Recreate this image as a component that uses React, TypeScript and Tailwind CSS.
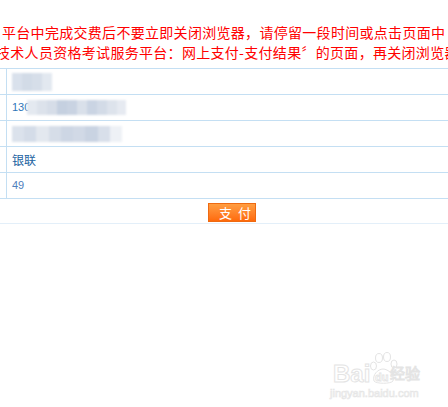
import React from "react";

function Blocks({ colors, w, h }: { colors: string[]; w: number; h: number }) {
  return (
    <div className="flex blur-[1.2px]" style={{ width: w, height: h }}>
      {colors.map((c, i) => (
        <div key={i} className="flex-1 h-full" style={{ backgroundColor: c }} />
      ))}
    </div>
  );
}

function Row({ children }: { children?: React.ReactNode }) {
  return (
    <div className="flex h-[26px] border-t border-[#c4dff3]">
      <div className="w-[6px] shrink-0" />
      <div className="flex flex-1 items-center border-l border-[#c4dff3] pl-[5px]">{children}</div>
    </div>
  );
}

export default function App() {
  return (
    <div className="relative w-[448px] h-[407px] overflow-hidden bg-white font-['Noto_Sans_CJK_SC',sans-serif]">
      <div className="h-[68px] pt-[22px] text-[14px] leading-[20px] text-[#ff0000] whitespace-nowrap tracking-[0.3px]">
        <div className="ml-[2px]">平台中完成交费后不要立即关闭浏览器，请停留一段时间或点击页面中</div>
        <div className="-ml-[4px]">技术人员资格考试服务平台：网上支付-支付结果〞的页面，再关闭浏览器</div>
      </div>

      <Row>
        <Blocks colors={["#d9e1ec", "#d2dbe7", "#d6dee9", "#e2e8f0"]} w={40} h={18} />
      </Row>
      <Row>
        <span className="font-['Liberation_Sans',sans-serif] text-[11px] text-[#2f76b8]">130</span>
        <div className="-ml-[3px]">
          <Blocks
            colors={["#e4e9f0", "#dce2eb", "#d6dde8", "#c5d0e0", "#c9d3e2", "#d9e0ea", "#cad4e3", "#d3dbe7", "#dde3ec", "#e6eaf1"]}
            w={99}
            h={15}
          />
        </div>
      </Row>
      <Row>
        <Blocks
          colors={["#dbe2ec", "#d4dce8", "#e3e8ef", "#d6dde8", "#cdd6e4", "#d1d9e6", "#c9d3e2", "#d8dfea", "#eef1f6"]}
          w={110}
          h={16}
        />
      </Row>
      <Row>
        <span className="text-[12px] text-[#22629f]">银联</span>
      </Row>
      <Row>
        <span className="font-['Liberation_Sans',sans-serif] text-[11px] text-[#4f80bd]">49</span>
      </Row>

      <div className="h-[26px] border-t border-b border-t-[#c4dff3] border-b-[#e3eff9] pt-[4px] pl-[208px]">
        <div className="w-[48px] h-[19px] border border-[#ee6a12] bg-linear-to-b from-[#ff9d40] to-[#ff6a08] pl-[10px] text-[13px] leading-[17px] text-white tracking-[6px] whitespace-nowrap">
          支付
        </div>
      </div>

      <div className="absolute left-[330px] top-[350px] w-[100px] h-[50px] select-none">
        <div className="absolute left-[3px] top-[14px] text-[24px] leading-[20px] font-bold font-['Liberation_Sans',sans-serif] text-white [-webkit-text-stroke:1px_#e4e4e4] whitespace-nowrap">
          Bai
        </div>
        <svg className="absolute left-[40px] top-[2px]" width="30" height="32" viewBox="0 0 30 32">
          <g fill="white" stroke="#e4e4e4" strokeWidth="1">
            <ellipse cx="9" cy="6" rx="3.5" ry="4.5" />
            <ellipse cx="17" cy="5" rx="3.5" ry="4.5" />
            <ellipse cx="3.5" cy="14" rx="3" ry="4" />
            <ellipse cx="24" cy="12" rx="3" ry="4" />
            <path d="M4 29 C2 23 8 17 13 17 C18 17 25 23 23 29 C21 32 6 32 4 29 Z" />
          </g>
          <text x="5" y="29" fontSize="11" fontWeight="bold" fontFamily="Liberation Sans" fill="white" stroke="#e4e4e4" strokeWidth="0.8">du</text>
        </svg>
        <div className="absolute left-[60px] top-[14px] text-[15px] leading-[18px] text-white [-webkit-text-stroke:1px_#e4e4e4] whitespace-nowrap">
          经验
        </div>
        <div className="absolute left-[0px] top-[37px] text-[11px] leading-[12px] font-['Liberation_Sans',sans-serif] text-white [-webkit-text-stroke:0.7px_#e6e6e6] whitespace-nowrap">
          jingyan.baidu.com
        </div>
      </div>
    </div>
  );
}
